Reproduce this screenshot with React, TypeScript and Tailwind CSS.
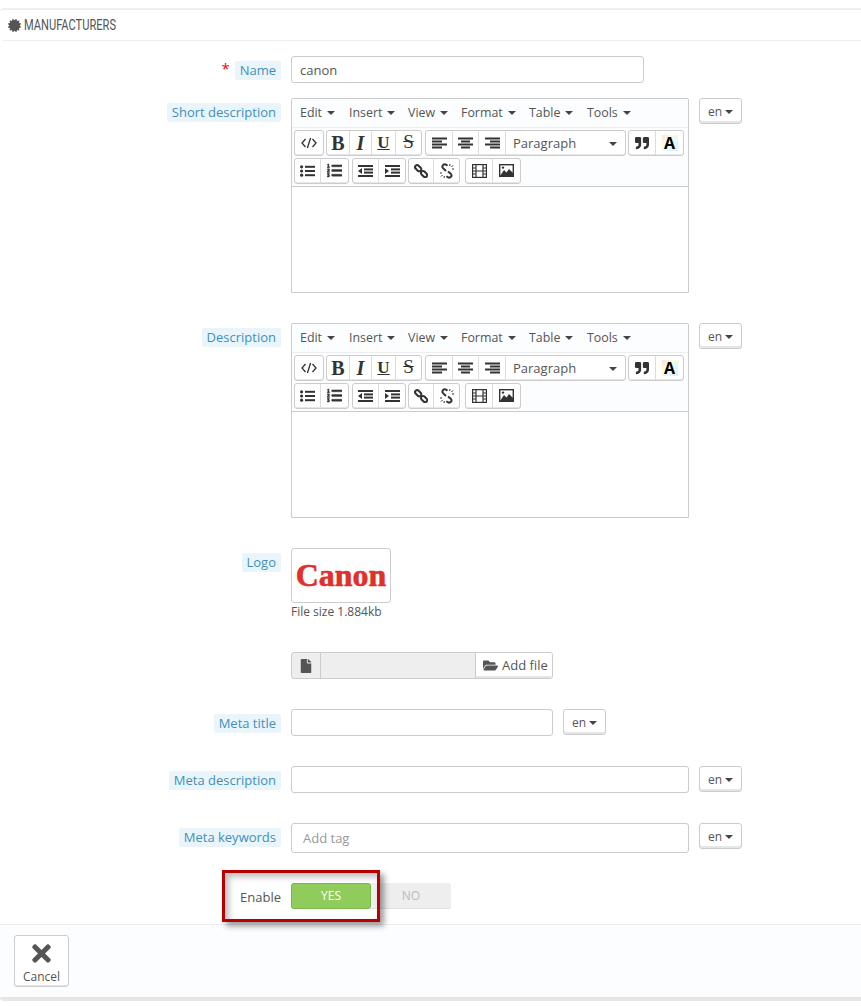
import type { ReactNode } from 'react';
import {
  FaCertificate,
  FaFile,
  FaFolderOpen,
  FaListOl,
  FaQuoteRight,
  FaTimes,
} from 'react-icons/fa';

const MENU_ITEMS = [
  { name: 'Edit', width: 'w-[49px]' },
  { name: 'Insert', width: 'w-[59px]' },
  { name: 'View', width: 'w-[53px]' },
  { name: 'Format', width: 'w-[68px]' },
  { name: 'Table', width: 'w-[58px]' },
  { name: 'Tools', width: 'w-[50px]' },
];

function Caret() {
  return <span className="inline-block w-0 h-0 border-x-[4px] border-x-transparent border-t-[4px] border-t-[#444]" />;
}

// toolbar drawings, the icon font of the editor has no exact package match
function AlignIcon({ bars }: { bars: [number, number][] }) {
  return (
    <svg width="15" height="12" viewBox="0 0 15 12" fill="#333">
      {bars.map(([x, w], i) => (
        <rect key={i} x={x} y={i * 3 + 0.5} width={w} height="2" />
      ))}
    </svg>
  );
}

function BulletIcon() {
  return (
    <svg width="15" height="12" viewBox="0 0 15 12" fill="#333">
      <circle cx="1.6" cy="1.8" r="1.6" />
      <circle cx="1.6" cy="6" r="1.6" />
      <circle cx="1.6" cy="10.2" r="1.6" />
      <rect x="5" y="0.8" width="10" height="2" />
      <rect x="5" y="5" width="10" height="2" />
      <rect x="5" y="9.2" width="10" height="2" />
    </svg>
  );
}

function IndentIcon({ out }: { out?: boolean }) {
  return (
    <svg width="15" height="12" viewBox="0 0 15 12" fill="#333">
      <rect x="0" y="0" width="15" height="2" />
      <rect x="6" y="3.4" width="9" height="2" />
      <rect x="6" y="6.6" width="9" height="2" />
      <rect x="0" y="10" width="15" height="2" />
      <path d={out ? 'M4 3 L0 6 L4 9 Z' : 'M0 3 L4 6 L0 9 Z'} />
    </svg>
  );
}

function CodeIcon() {
  return (
    <svg width="16" height="12" viewBox="0 0 16 12" fill="none" stroke="#333" strokeWidth="1.3">
      <path d="M4.5 2 L1 6 L4.5 10" />
      <path d="M9.6 1 L6.4 11" />
      <path d="M11.5 2 L15 6 L11.5 10" />
    </svg>
  );
}

function LinkIcon() {
  return (
    <svg width="14" height="14" viewBox="0 0 15 15" fill="none" stroke="#333" strokeWidth="2.2">
      <rect x="-3.4" y="-2.2" width="7.6" height="4.4" rx="2.2" transform="translate(4.2 4.2) rotate(45)" />
      <rect x="-3.8" y="-2.2" width="7.6" height="4.4" rx="2.2" transform="translate(10.8 10.8) rotate(45)" />
    </svg>
  );
}

function UnlinkIcon() {
  return (
    <svg width="16" height="16" viewBox="0 0 16 16" fill="none" stroke="#333">
      <path d="M8.5 2.6 L7 1.6 Q5.2 0.8 4 2.2 Q2.8 3.6 4 5.2 L7 8" strokeWidth="2" />
      <path d="M9 8.4 L11.8 10.8 Q13.2 12.4 12 13.8 Q10.6 15.2 8.8 14.2 L7.4 13.2" strokeWidth="2" />
      <path d="M11 1 L10.6 3 M14 2.4 L12.4 4 M15 6 L13 6 M1 10 L3 10 M2 13.6 L3.6 12 M5 15 L5.4 13" strokeWidth="1" />
    </svg>
  );
}

function FilmIcon() {
  return (
    <svg width="15" height="14" viewBox="0 0 15 14" fill="none" stroke="#333" strokeWidth="1.2">
      <rect x="0.6" y="0.6" width="13.8" height="12.8" />
      <path d="M4 0.6 V13.4 M11 0.6 V13.4 M0.6 4 H4 M0.6 7 H14.4 M0.6 10 H4 M11 4 H14.4 M11 10 H14.4" />
    </svg>
  );
}

function ImageIcon() {
  return (
    <svg width="15" height="13" viewBox="0 0 15 13">
      <rect x="0.7" y="0.7" width="13.6" height="11.6" fill="#fff" stroke="#333" strokeWidth="1.4" />
      <path d="M1 12 L5 6 L7.5 8.5 L10 5 L14 9 V12 Z" fill="#333" />
      <circle cx="4" cy="3.6" r="1.2" fill="#333" />
    </svg>
  );
}

function FieldLabel({ children, required }: { children: ReactNode; required?: boolean }) {
  return (
    <div className="w-[281px] shrink-0 flex justify-end items-start gap-[5px]">
      {required && <span className="text-[#f00] text-[15px] leading-[24px]">*</span>}
      <span className="bg-[#eaf5fb] text-[#4290b8] rounded-[2px] px-[5px] h-[19px] leading-[18px] mt-[5px]">
        {children}
      </span>
    </div>
  );
}

function LangButton() {
  return (
    <button className="ml-[10px] h-[26px] w-[43px] border border-[#ccc] rounded-[3px] bg-white shadow-[inset_0_-2px_0_#e6e6e6] flex items-center justify-center gap-[3px] pt-[1px] text-[#555] text-[12px]">
      en <Caret />
    </button>
  );
}

function ToolGroup({ children }: { children: ReactNode }) {
  return (
    <div className="flex h-[26px] border border-[#ccc] rounded-[3px] bg-white shadow-[inset_0_-1px_0_#e6e6e6] divide-x divide-[#ddd]">
      {children}
    </div>
  );
}

function Tool({ w, children }: { w: string; children: ReactNode }) {
  return <div className={`${w} flex items-center justify-center text-[#333] pb-[1px]`}>{children}</div>;
}

function Editor() {
  return (
    <div className="w-[398px] h-[195px] border border-[#ccc] rounded-t-[2px] bg-white flex flex-col">
      <div className="h-[29px] bg-[#fcfdfe] border-b border-[#eee] flex items-center pl-[8px] pt-[1px] text-[#555] text-[12.4px]">
        {MENU_ITEMS.map((item) => (
          <span key={item.name} className={`${item.width} flex items-center gap-[5px]`}>
            {item.name} <Caret />
          </span>
        ))}
      </div>
      <div className="h-[59px] bg-[#fcfdfe] border-b border-[#ccc] pl-[2px] pt-[2px] flex flex-col gap-[2px]">
        <div className="flex gap-[2px]">
          <ToolGroup>
            <Tool w="w-[28px]">
              <CodeIcon />
            </Tool>
          </ToolGroup>
          <ToolGroup>
            <Tool w="w-[23px]">
              <span className="font-['Liberation_Serif',serif] font-bold text-[20px]">B</span>
            </Tool>
            <Tool w="w-[22px]">
              <span className="font-['Liberation_Serif',serif] italic font-bold text-[20px]">I</span>
            </Tool>
            <Tool w="w-[24px]">
              <span className="font-['Liberation_Serif',serif] font-bold underline text-[17px]">U</span>
            </Tool>
            <Tool w="w-[25px]">
              <span className="font-['Liberation_Serif',serif] line-through text-[19px]">S</span>
            </Tool>
          </ToolGroup>
          <div className="ml-[1px]">
            <ToolGroup>
              <Tool w="w-[27px]">
                <AlignIcon bars={[[0, 15], [0, 10], [0, 15], [0, 10]]} />
              </Tool>
              <Tool w="w-[26px]">
                <AlignIcon bars={[[0, 15], [3, 9], [0, 15], [3, 9]]} />
              </Tool>
              <Tool w="w-[27px]">
                <AlignIcon bars={[[0, 15], [5, 10], [0, 15], [5, 10]]} />
              </Tool>
              <div className="w-[119px] flex items-center justify-between pl-[7px] pr-[8px] pt-[1px] text-[#555] text-[13px]">
                Paragraph <Caret />
              </div>
            </ToolGroup>
          </div>
          <ToolGroup>
            <Tool w="w-[27px]">
              <FaQuoteRight size={14} />
            </Tool>
            <Tool w="w-[27px]">
              <span className="w-[16px] h-[16px] flex items-center justify-center bg-[linear-gradient(135deg,#fde0e0,#fdfce0,#e0f8f8,#dfeafd)] text-black font-bold text-[16px]">
                A
              </span>
            </Tool>
          </ToolGroup>
        </div>
        <div className="flex">
          <ToolGroup>
            <Tool w="w-[26px]">
              <BulletIcon />
            </Tool>
            <Tool w="w-[27px]">
              <FaListOl size={15} stroke="currentColor" strokeWidth={16} />
            </Tool>
          </ToolGroup>
          <div className="ml-[3px]">
            <ToolGroup>
              <Tool w="w-[26px]">
                <IndentIcon out />
              </Tool>
              <Tool w="w-[26px]">
                <IndentIcon />
              </Tool>
            </ToolGroup>
          </div>
          <div className="ml-[2px]">
            <ToolGroup>
              <Tool w="w-[25px]">
                <LinkIcon />
              </Tool>
              <Tool w="w-[25px]">
                <UnlinkIcon />
              </Tool>
            </ToolGroup>
          </div>
          <div className="ml-[5px]">
            <ToolGroup>
              <Tool w="w-[27px]">
                <FilmIcon />
              </Tool>
              <Tool w="w-[27px]">
                <ImageIcon />
              </Tool>
            </ToolGroup>
          </div>
        </div>
      </div>
    </div>
  );
}

export default function App() {
  return (
    <div className="relative w-[861px] h-[1006px] overflow-hidden bg-white text-[13px] text-[#555] font-['Open_Sans',sans-serif]">
      <div className="pt-[8px]">
        <div className="border-t-2 border-[#eee] rounded-tl-[4px]">
          <div className="h-[31px] ml-[3px] border-b border-[#eee] flex items-center pl-[5px] gap-[3px] text-[#555]">
            <FaCertificate size={13} />
            <span className="font-['Roboto',sans-serif] text-[15px] origin-left scale-x-[0.74] whitespace-nowrap">
              MANUFACTURERS
            </span>
          </div>

          <div className="flex mt-[15px]">
            <FieldLabel required>Name</FieldLabel>
            <input
              readOnly
              value="canon"
              className="ml-[10px] w-[353px] h-[27px] border border-[#ccc] rounded-[3px] px-[8px] text-[13px] text-[#555]"
            />
          </div>

          <div className="flex mt-[15px]">
            <FieldLabel>Short description</FieldLabel>
            <div className="ml-[10px]">
              <Editor />
            </div>
            <LangButton />
          </div>

          <div className="flex mt-[30px]">
            <FieldLabel>Description</FieldLabel>
            <div className="ml-[10px]">
              <Editor />
            </div>
            <LangButton />
          </div>

          <div className="flex mt-[30px]">
            <FieldLabel>Logo</FieldLabel>
            <div className="ml-[10px]">
              <div className="w-[100px] h-[55px] border border-[#ccc] rounded-[3px] flex items-center justify-center">
                <span className="font-['Liberation_Serif',serif] font-bold text-[31px] text-[#e0302a] leading-none scale-x-[1.03] [-webkit-text-stroke:0.6px_#e0302a]">
                  Canon
                </span>
              </div>
              <div className="text-[12px] leading-[17px]">File size 1.884kb</div>
            </div>
          </div>

          <div className="flex mt-[32px]">
            <div className="w-[281px] shrink-0" />
            <div className="ml-[10px] w-[262px] h-[27px] border border-[#ccc] rounded-[3px] flex bg-[#eee] overflow-hidden">
              <div className="w-[29px] border-r border-[#ccc] flex items-center justify-center">
                <FaFile size={14} />
              </div>
              <div className="flex-1" />
              <div className="w-[77px] border-l border-[#ccc] bg-white shadow-[inset_0_-2px_0_#e6e6e6] flex items-center pl-[7px] gap-[4px]">
                <FaFolderOpen size={15} />
                Add file
              </div>
            </div>
          </div>

          <div className="flex mt-[30px]">
            <FieldLabel>Meta title</FieldLabel>
            <input readOnly className="ml-[10px] w-[262px] h-[27px] border border-[#ccc] rounded-[3px]" />
            <LangButton />
          </div>

          <div className="flex mt-[30px]">
            <FieldLabel>Meta description</FieldLabel>
            <input readOnly className="ml-[10px] w-[398px] h-[27px] border border-[#ccc] rounded-[3px]" />
            <LangButton />
          </div>

          <div className="flex mt-[30px]">
            <FieldLabel>Meta keywords</FieldLabel>
            <div className="ml-[10px] w-[398px] h-[30px] border border-[#ccc] rounded-[3px] pl-[11px] leading-[29px] text-[#999]">
              Add tag
            </div>
            <LangButton />
          </div>

          <div className="flex mt-[30px] h-[26px]">
            <div className="w-[281px] shrink-0 text-right leading-[28px]">Enable</div>
            <div className="ml-[10px] w-[160px] h-[26px] rounded-[3px] bg-[#eee] flex text-[12px] shadow-[inset_0_-1px_0_#e0e0e0]">
              <div className="w-[80px] h-[26px] rounded-[3px] bg-[#8fcc5b] border border-[#79b84a] text-white flex items-center justify-center">
                YES
              </div>
              <div className="flex-1 flex items-center justify-center text-[#bbb]">NO</div>
            </div>
          </div>
        </div>

        <div className="mt-[15px] h-[73px] border-t border-[#eee] bg-[#fcfdfe] pl-[14px] pt-[10px] rounded-bl-[4px]">
          <button className="w-[55px] h-[52px] border border-[#ccc] rounded-[3px] bg-white shadow-[inset_0_-1px_0_#e6e6e6] flex flex-col items-center text-[12px] text-[#555] pt-[4px]">
            <FaTimes size={27} />
            <span className="leading-[14px] mt-[3px]">Cancel</span>
          </button>
        </div>
        <div className="h-[4px] bg-[#e6e6e6] rounded-bl-[4px]" />
      </div>

      {/* annotation drawn over the Enable row */}
      <div className="absolute left-[222px] top-[870px] w-[158px] h-[52px] border-[3px] border-[#b70000] shadow-[4px_4px_6px_rgba(0,0,0,0.4),inset_4px_4px_6px_rgba(0,0,0,0.25)]" />
    </div>
  );
}
